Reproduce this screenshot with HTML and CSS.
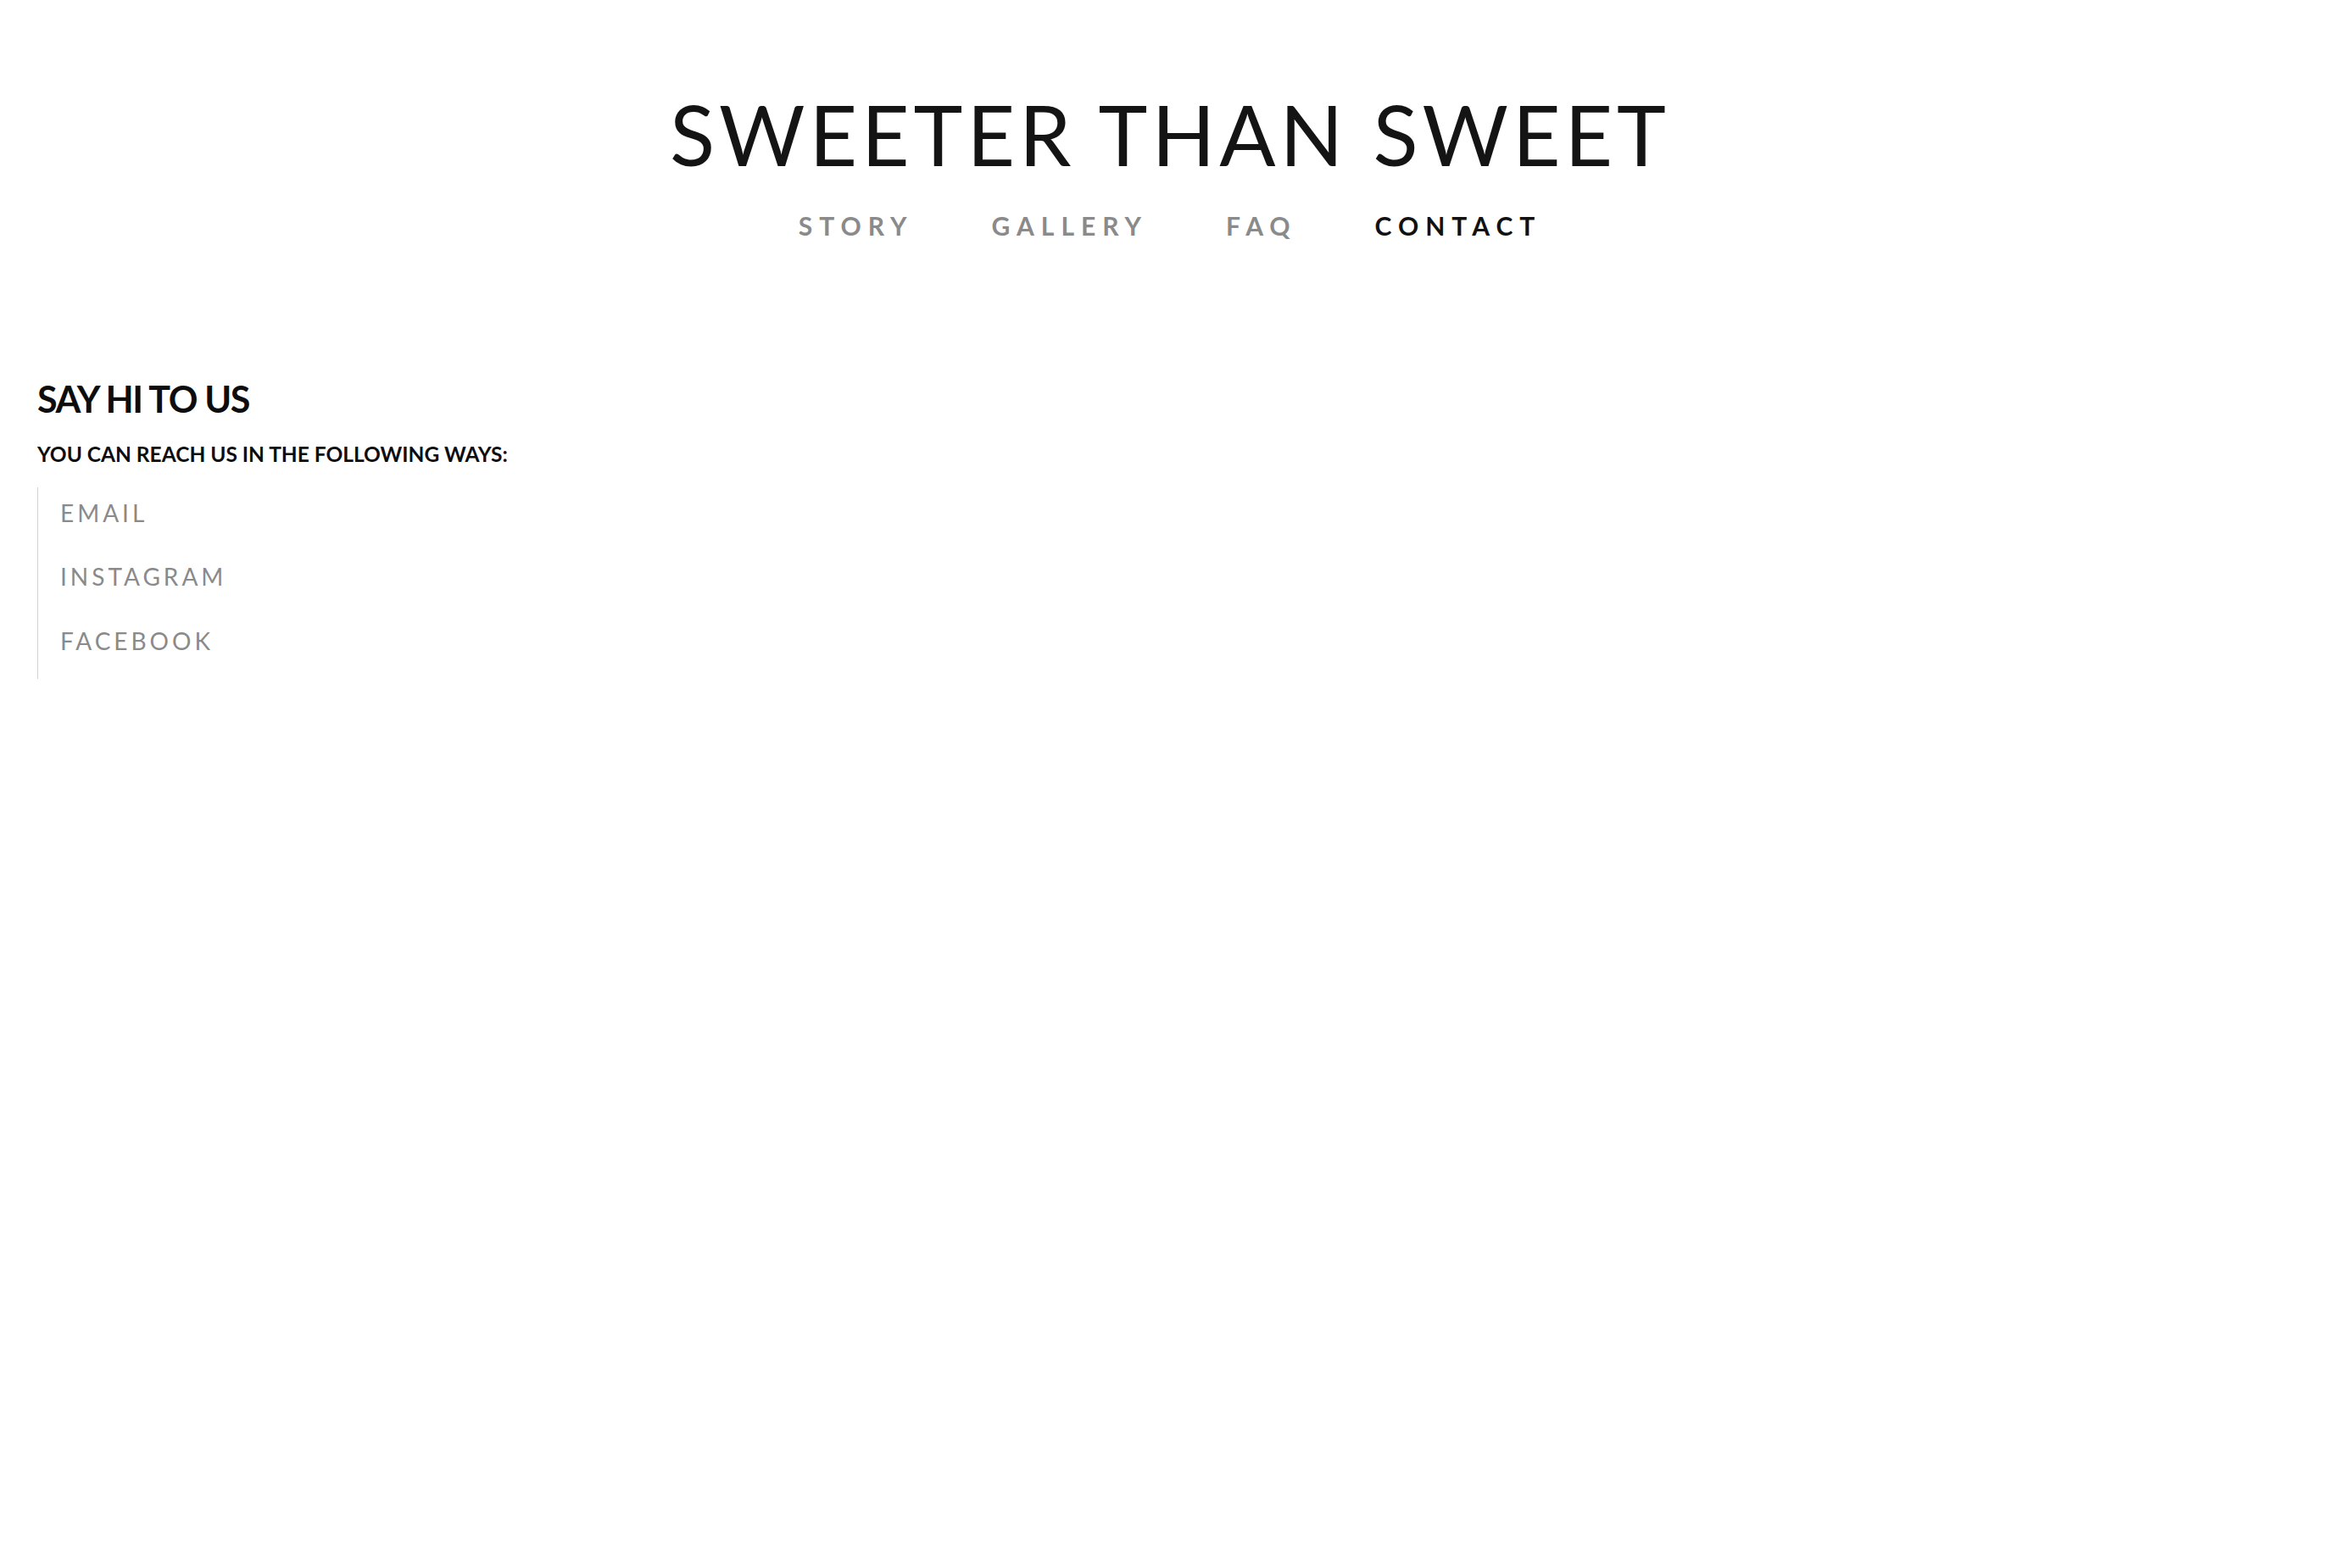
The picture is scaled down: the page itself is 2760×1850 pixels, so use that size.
FILE: index.html
```html
<!DOCTYPE html>
<html lang="en">
<head>
<meta charset="utf-8">
<title>Sweeter Than Sweet — Contact</title>
<link rel="stylesheet" href="styles.css">
</head>
<body>
  <header class="site-header">
    <h1 class="site-title">SWEETER THAN SWEET</h1>
    <nav class="site-nav">
      <a class="nav-link" href="#">STORY</a>
      <a class="nav-link" href="#">GALLERY</a>
      <a class="nav-link" href="#">FAQ</a>
      <a class="nav-link is-active" href="#">CONTACT</a>
    </nav>
  </header>
  <main class="contact">
    <h2 class="contact-title">SAY HI TO US</h2>
    <p class="contact-sub">YOU CAN REACH US IN THE FOLLOWING WAYS:</p>
    <ul class="contact-list">
      <li class="contact-item"><a href="#">EMAIL</a></li>
      <li class="contact-item"><a href="#">INSTAGRAM</a></li>
      <li class="contact-item"><a href="#">FACEBOOK</a></li>
    </ul>
  </main>
</body>
</html>
```
FILE: styles.css
```css
html, body {
  margin: 0;
  padding: 0;
  background: #ffffff;
}
body {
  font-family: Lato, "Open Sans", "Liberation Sans", sans-serif;
  color: #111111;
}
a {
  text-decoration: none;
  color: inherit;
}
.site-header {
  display: flex;
  flex-direction: column;
  align-items: center;
  padding-top: 100px;
}
.site-title {
  margin: 0;
  font-size: 98px;
  font-weight: 400;
  line-height: 1.2;
  letter-spacing: 5px;
  color: #141414;
}
.site-nav {
  display: flex;
  gap: 92px;
  margin-top: 30px;
}
.nav-link {
  font-size: 30px;
  font-weight: 700;
  line-height: 1.2;
  letter-spacing: 8px;
  color: #8a8a8a;
}
.nav-link.is-active {
  color: #111111;
}
.contact {
  padding: 0 44px;
  margin-top: 161px;
}
.contact-title {
  margin: 0;
  font-size: 43px;
  font-weight: 700;
  line-height: 1.2;
  letter-spacing: -1.4px;
  color: #0d0d0d;
}
.contact-sub {
  margin: 25px 0 0;
  font-size: 24.5px;
  font-weight: 700;
  line-height: 1.2;
  color: #0d0d0d;
}
.contact-list {
  list-style: none;
  margin: 0;
  margin-top: 24px;
  padding: 14px 0 28px 26px;
  border-left: 1px solid #d4d4d4;
  display: flex;
  flex-direction: column;
  gap: 42px;
}
.contact-item {
  font-size: 28px;
  font-weight: 400;
  line-height: 1.2;
  letter-spacing: 4px;
  color: #8a8a8a;
}
```
